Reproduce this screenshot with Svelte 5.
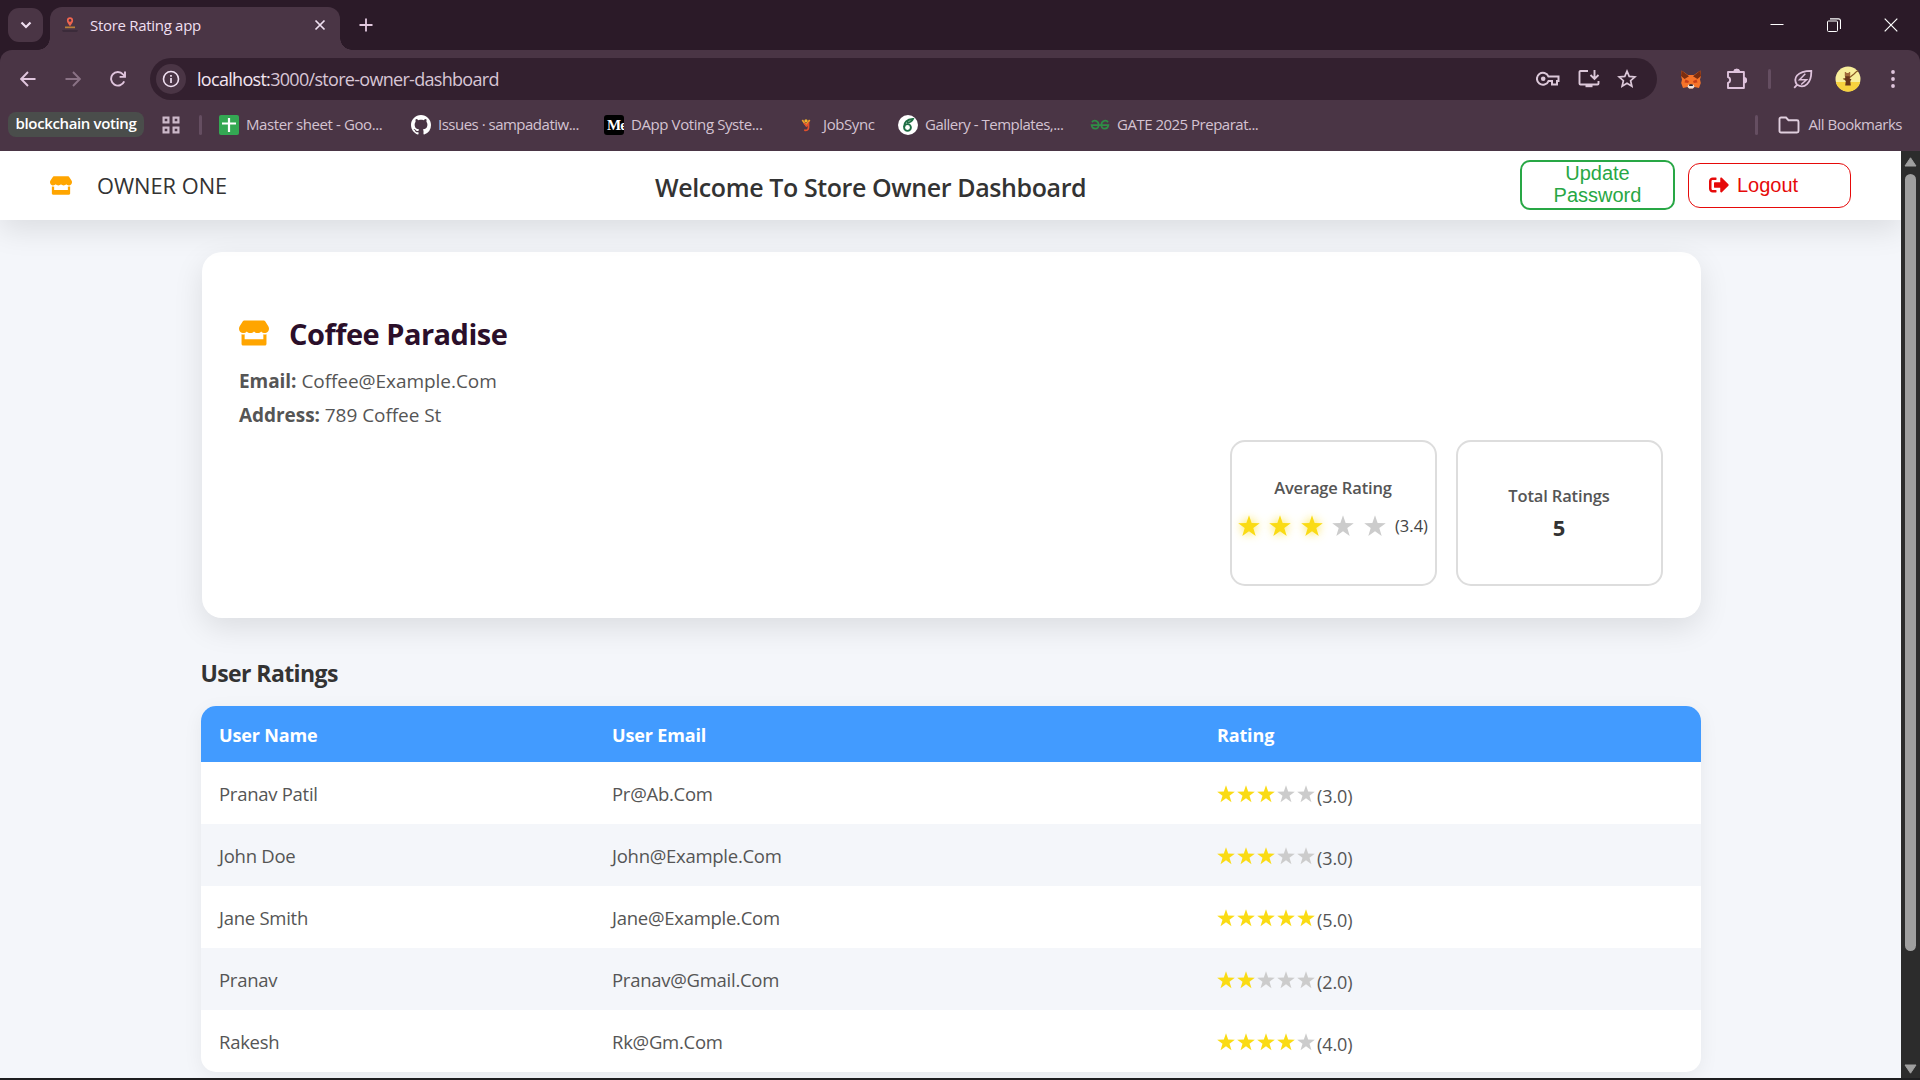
<script>
  const ratings = [
    { name: 'Pranav Patil', email: 'Pr@Ab.Com', score: 3 },
    { name: 'John Doe', email: 'John@Example.Com', score: 3 },
    { name: 'Jane Smith', email: 'Jane@Example.Com', score: 5 },
    { name: 'Pranav', email: 'Pranav@Gmail.Com', score: 2 },
    { name: 'Rakesh', email: 'Rk@Gm.Com', score: 4 }
  ];
  const five = [1, 2, 3, 4, 5];
  const starPoints = '10,0.2 12.4,7.3 19.8,7.4 13.9,11.9 16.1,19.1 10,14.8 3.9,19.1 6.1,11.9 0.2,7.4 7.6,7.3';
</script>

{#snippet store(kind)}
  <svg class="store {kind}" viewBox="0 0 616 512"><path d="M602 118.6L537.1 15C531.3 5.7 521 0 510 0H106C95 0 84.7 5.7 78.9 15L14 118.6c-33.5 53.5-3.8 127.9 58.8 136.4 4.5.6 9.1.9 13.7.9 29.6 0 55.8-13 73.8-33.1 18 20.1 44.3 33.1 73.8 33.1 29.6 0 55.8-13 73.8-33.1 18 20.1 44.3 33.1 73.8 33.1 29.6 0 55.8-13 73.8-33.1 18.1 20.1 44.3 33.1 73.8 33.1 4.7 0 9.2-.3 13.7-.9 62.8-8.4 92.6-82.8 59-136.4zM529.5 288c-10 0-19.9-1.5-29.5-3.8V384H116v-99.8c-9.6 2.2-19.5 3.8-29.5 3.8-6 0-12.1-.4-18-1.2-5.6-.8-11.1-2.1-16.4-3.6V480c0 17.7 14.3 32 32 32h448c17.7 0 32-14.3 32-32V283.2c-5.4 1.6-10.8 2.9-16.4 3.6-6.1.8-12.1 1.2-18.2 1.2z" /></svg>
{/snippet}

<div class="window">
  <div class="tabstrip">
    <div class="tab-search">
      <svg width="12" height="8" viewBox="0 0 12 8"><path d="M1.5 1.5 6 6l4.500-4.500" fill="none" stroke="#efdff0" stroke-width="2.200" /></svg>
    </div>
    <div class="tab">
      <svg class="favicon" width="16" height="16" viewBox="0 0 16 16">
        <path d="M0 13h16l-1 2H1z" fill="#3b2b3a" />
        <path d="M3 9.500h10v1.700H3z" fill="#b9813a" />
        <path d="M8 9.300C6.500 7 4.900 5.300 4.900 3.400a3.100 3.100 0 0 1 6.200 0C11.100 5.300 9.500 7 8 9.300z" fill="#f0654f" />
        <circle cx="8" cy="3.400" r="1.300" fill="#4a3545" />
      </svg>
      <span class="tab-title">Store Rating app</span>
      <svg width="12" height="12" viewBox="0 0 12 12"><path d="M1.500 1.500l9 9M10.500 1.500l-9 9" stroke="#efdff0" stroke-width="1.700" /></svg>
    </div>
    <svg class="new-tab" width="14" height="14" viewBox="0 0 14 14"><path d="M7 .5v13M.5 7h13" stroke="#e3c9df" stroke-width="1.800" /></svg>
    <div class="win-controls">
      <svg width="14" height="14" viewBox="0 0 14 14"><path d="M.5 6.500h13" stroke="#fff" stroke-width="1" /></svg>
      <svg width="14" height="14" viewBox="0 0 14 14" fill="none" stroke="#fff"><rect x=".5" y="3" width="10" height="10.500" rx="1" /><path d="M3 .9h8.500a2 2 0 0 1 2 2V11" stroke-width="1.100" /></svg>
      <svg width="14" height="14" viewBox="0 0 14 14"><path d="M.7.7l12.600 12.600M13.300.7.7 13.300" stroke="#fff" stroke-width="1.200" /></svg>
    </div>
  </div>

  <div class="toolbar">
    <div class="nav">
      <svg width="16" height="16" viewBox="0 0 16 16" fill="none" stroke="#e0c5dd" stroke-width="1.900"><path d="M15.500 8H1.500M8 1 1.200 8 8 15" /></svg>
      <svg class="dim" width="16" height="16" viewBox="0 0 16 16" fill="none" stroke="#8a7285" stroke-width="1.900"><path d="M.5 8h14M8 1l6.800 7L8 15" /></svg>
      <svg width="16" height="16" viewBox="0 0 16 16" fill="none" stroke="#e0c5dd" stroke-width="1.900"><path d="M14.200 10.400A6.800 6.800 0 1 1 13 3.300L15 5.400" /><path d="M15 .5v5.400H9.600" /></svg>
    </div>
    <div class="omnibox">
      <div class="info">
        <svg width="18" height="18" viewBox="0 0 18 18" fill="none" stroke="#efdff0"><circle cx="9" cy="9" r="7.500" stroke-width="1.600" /><path d="M9 8v5M9 5v1.700" stroke-width="1.700" /></svg>
      </div>
      <span class="url"><b>localhost:</b>3000/store-owner-dashboard</span>
      <div class="omni-icons">
        <svg width="24" height="16" viewBox="0 0 24 16" fill="none" stroke="#dcc8d9" stroke-width="2"><path d="M12.500 5.500a6 6 0 1 0 0 4.500H16v3.500h5V10h1.500V5.500z" /><circle cx="7.200" cy="7.800" r="2.300" fill="#dcc8d9" stroke="none" /></svg>
        <svg width="22" height="20" viewBox="0 0 22 20" fill="none" stroke="#dcc8d9" stroke-width="1.900"><path d="M10 2H2.500a1 1 0 0 0-1 1v11.500a1 1 0 0 0 1 1h17a1 1 0 0 0 1-1V12M16.500 1v8.500M12.500 6l4 4 4-4" /><path d="M7.500 15.500h7v2.700h-7z" fill="#dcc8d9" stroke="none" /></svg>
        <svg width="20" height="20" viewBox="0 0 20 20" fill="none" stroke="#dcc8d9" stroke-width="1.700"><path d="M10 2.200l2.200 5.200 5.700.5-4.300 3.800 1.300 5.600L10 14.300l-4.900 3 1.300-5.600-4.300-3.800 5.700-.5z" /></svg>
      </div>
    </div>
    <div class="extensions">
      <svg width="20" height="19" viewBox="0 0 20 19">
        <path d="M.6.600 7 5h6l6.400-4.400L20 6l-1 3.500.8 3.500-1.800 5-4.500-1-1.700 1.600H8.200L6.500 17 2 18 .2 13 1 9.500 0 6z" fill="#f5742a" />
        <path d="M.6.600 8 6.200 3.600 9 0 6zM19.400.600 12 6.200 16.400 9 20 6z" fill="#7a2d10" />
        <path d="M4.500 9.500 8 11l-.8 2-3.700-.6zM15.500 9.500 12 11l.8 2 3.700-.6z" fill="#c8401a" />
        <path d="M7.300 14.800h5.400l.8 2-1.600 1.800H8.100l-1.600-1.800z" fill="#e9e2e0" /><path d="M8.500 14.300h3l.5 1.800H8z" fill="#27202b" />
      </svg>
      <svg class="puzzle" width="22" height="22" viewBox="0 0 22 22" fill="none" stroke="#dfc3dc" stroke-width="1.900" stroke-linejoin="round"><path d="M2 4h6.500a2.200 2.200 0 0 1 4.400 0h5v6.500a2 2 0 0 1 0 4V20H2v-5.200a2.900 2.900 0 0 0 0-5.600z" /><path d="M8.500 4a2.200 2.200 0 0 1 4.400 0zM17.900 10a2.200 2.200 0 0 1 0 4.400z" fill="#dfc3dc" /></svg>
      <i class="divider"></i>
      <svg width="20" height="20" viewBox="0 0 20 20" fill="none" stroke="#dfc3dc" stroke-width="1.800"><path d="M1.200 18.800 4 15.800C-.2 9.500 3.500 2 18.300 1.800 18.600 14 11.500 20.500 4 15.800" /><path d="M12.300 4.800 6.500 10.800h7L8.200 15.500" stroke-width="1.500" /></svg>
      <svg class="avatar" width="26" height="26" viewBox="0 0 26 26">
        <circle cx="13" cy="13" r="12.500" fill="#f8ee9b" /><path d="M.8 16h24.400a12.500 12.500 0 0 1-24.400 0z" fill="#f8d23e" />
        <path d="M14 12 19 8l2.500-2.500 2-.5M8 13l5-1" stroke="#8a5a25" stroke-width="1.200" fill="none" />
        <path d="M10 9.500h5l-.3 3 1.800 1-1.200 1.500.5 4.500h-5.600l.6-4.500L9 13.500l1.300-1z" fill="#67351b" /><path d="M9.800 6h1.400v1h2.600V6h1.400v4.300h-5.400z" fill="#a16b3b" />
      </svg>
      <svg class="menu" width="4" height="20" viewBox="0 0 4 20" fill="#e0c5dd"><circle cx="2" cy="3" r="1.900" /><circle cx="2" cy="10" r="1.900" /><circle cx="2" cy="17" r="1.900" /></svg>
    </div>
  </div>

  <div class="bookmarks">
    <span class="group">blockchain voting</span>
    <svg class="apps" width="20" height="20" viewBox="0 0 20 20" fill="none" stroke="#cdb9ca" stroke-width="2.200"><path d="M2.600 2.600h4.800v4.800H2.600zM12.600 2.600h4.800v4.800h-4.800zM2.600 12.600h4.800v4.800H2.600zM12.600 12.600h4.800v4.800h-4.800z" /></svg>
    <i class="divider"></i>
    <span class="bm sheet"><svg width="20" height="20" viewBox="0 0 20 20"><rect width="20" height="20" rx="2" fill="#34a853" /><path d="M10 3v14M3 8.500h14" stroke="#fff" stroke-width="2.200" /></svg><em>Master sheet - Goo...</em></span>
    <span class="bm issues"><svg width="20" height="20" viewBox="0 0 16 16"><path fill="#fff" d="M8 0C3.580 0 0 3.580 0 8c0 3.540 2.290 6.530 5.470 7.590.4.070.55-.17.55-.38 0-.19-.01-.82-.01-1.490-2.010.37-2.530-.49-2.690-.94-.09-.23-.48-.94-.82-1.130-.28-.15-.68-.52-.01-.53.63-.01 1.080.58 1.230.82.72 1.210 1.870.87 2.330.66.070-.52.28-.87.51-1.070-1.780-.2-3.640-.89-3.640-3.950 0-.87.31-1.590.82-2.150-.08-.2-.36-1.020.08-2.120 0 0 .67-.21 2.200.82.64-.18 1.320-.27 2-.27s1.360.09 2 .27c1.530-1.040 2.200-.82 2.200-.82.44 1.100.16 1.920.08 2.120.51.56.82 1.270.82 2.150 0 3.070-1.870 3.750-3.650 3.950.29.25.54.73.54 1.480 0 1.070-.01 1.930-.01 2.200 0 .21.15.46.55.38A8.010 8.010 0 0 0 16 8c0-4.420-3.580-8-8-8z" /></svg><em>Issues · sampadatiw...</em></span>
    <span class="bm dapp"><span class="medium">Me</span><em>DApp Voting Syste...</em></span>
    <span class="bm job"><svg width="20" height="20" viewBox="0 0 20 20" fill="none" stroke-width="1.700"><path d="M6.300 5 10 10l3.700-5" stroke="#efa22a" /><circle cx="10" cy="5.800" r="1.600" fill="#f5b62c" /><path d="M8 8l2.500 3 2-2.500v4c0 2.200-1.300 3.200-4.300 2.700" stroke="#e2502c" /></svg><em>JobSync</em></span>
    <span class="bm gallery"><svg width="20" height="20" viewBox="0 0 20 20" fill="none" stroke="#1f6f45"><circle cx="10" cy="10" r="10" fill="#fff" stroke="none" /><circle cx="9.500" cy="12.500" r="3.400" stroke-width="1.900" /><path d="M6.100 12C6 7.500 9 4.500 15 4c-1 2.500-3 3.500-6 3.700" stroke-width="1.900" /></svg><em>Gallery - Templates,...</em></span>
    <span class="bm gate"><svg width="20" height="12" viewBox="0 0 20 12" fill="none" stroke="#2f8d46" stroke-width="1.700"><path d="M2 3.200C3.500.8 8.600 1.200 8.600 6c0 4.800-6.300 5-7 .2h16.800c-.7 4.800-7 4.600-7-.2 0-4.800 5.100-5.200 6.600-2.800" /></svg><em>GATE 2025 Preparat...</em></span>
    <span class="all"><i class="divider"></i><svg width="22" height="18" viewBox="0 0 22 18" fill="none" stroke="#e0cfde" stroke-width="1.900"><path d="M1.500 3a1.500 1.500 0 0 1 1.500-1.500h5l2.500 2.700h8.500A1.500 1.500 0 0 1 20.500 5.700V15a1.500 1.500 0 0 1-1.500 1.500H3A1.500 1.500 0 0 1 1.500 15z" /></svg><em>All Bookmarks</em></span>
  </div>

  <div class="viewport">
    <div class="page">
      <header>
        {@render store('small')}
        <span class="owner">OWNER ONE</span>
        <h1>Welcome To Store Owner Dashboard</h1>
        <button class="update">Update Password</button>
        <button class="logout">
          <svg width="20" height="20" viewBox="0 0 512 512" fill="#e60a0a"><path d="M497 273L329 441c-15 15-41 4.500-41-17v-96H152c-13.300 0-24-10.700-24-24v-96c0-13.300 10.700-24 24-24h136V88c0-21.400 25.900-32 41-17l168 168c9.300 9.400 9.300 24.600 0 34zM192 436v-40c0-6.600-5.400-12-12-12H96c-17.700 0-32-14.300-32-32V160c0-17.700 14.300-32 32-32h84c6.600 0 12-5.400 12-12V76c0-6.600-5.400-12-12-12H96c-53 0-96 43-96 96v192c0 53 43 96 96 96h84c6.600 0 12-5.400 12-12z" /></svg>
          Logout
        </button>
      </header>

      <section class="card">
        <h2>{@render store('large')}<span>Coffee Paradise</span></h2>
        <p class="email"><b>Email:</b> Coffee@Example.Com</p>
        <p class="address"><b>Address:</b> 789 Coffee St</p>
        <div class="stats">
          <div class="stat">
            <span class="label avg">Average Rating</span>
            <div class="big-stars">
              {#each five as n}
                <svg class:on={n <= 3} viewBox="0 0 20 20"><polygon points={starPoints} /></svg>
              {/each}
              <span>(3.4)</span>
            </div>
          </div>
          <div class="stat">
            <span class="label total">Total Ratings</span>
            <strong>5</strong>
          </div>
        </div>
      </section>

      <h3>User Ratings</h3>
      <div class="table">
        <div class="row head"><span>User Name</span><span>User Email</span><span>Rating</span></div>
        {#each ratings as r}
          <div class="row">
            <span>{r.name}</span>
            <span>{r.email}</span>
            <span class="stars">
              {#each five as n}
                <svg class:on={n <= r.score} viewBox="0 0 20 20"><polygon points={starPoints} /></svg>
              {/each}
              <small>({r.score}.0)</small>
            </span>
          </div>
        {/each}
      </div>
    </div>
    <div class="scrollbar">
      <svg width="13" height="10" viewBox="0 0 13 10"><path d="M6.500.8 12 9H1z" fill="#9f9f9f" stroke="#9f9f9f" stroke-linejoin="round" /></svg>
      <div class="thumb"></div>
      <svg class="down" width="13" height="10" viewBox="0 0 13 10"><path d="M6.500 9.200 12 1H1z" fill="#9f9f9f" stroke="#9f9f9f" stroke-linejoin="round" /></svg>
    </div>
  </div>
</div>

<style>
  :global(body) { margin: 0; background: #1f1f1f; overflow: hidden; }
  .window, .window * { box-sizing: border-box; }
  .window { width: 1920px; height: 1080px; display: flex; flex-direction: column; background: #2b1a28; font-family: 'Segoe UI', 'Open Sans', sans-serif; white-space: nowrap; border-bottom: 2px solid #1e1e20; }
  svg { flex: none; display: block; }
  em { font-style: normal; }
  .divider { width: 3px; height: 20px; border-radius: 2px; background: #654e61; flex: none; }

  .tabstrip { height: 50px; display: flex; align-items: center; padding-left: 8px; flex: none; }
  .tab-search { width: 35px; height: 34px; border-radius: 11px; background: #4a3545; display: grid; place-items: center; }
  .tab { position: relative; width: 290px; height: 43px; margin: 7px 0 0 7px; padding: 0 14px 7px 12px; border-radius: 12px 12px 0 0; background: #4a3545; display: flex; align-items: center; }
  .tab::before, .tab::after { content: ''; position: absolute; bottom: 0; width: 12px; height: 12px; }
  .tab::before { left: -12px; background: radial-gradient(circle at 0 0, transparent 11.500px, #4a3545 12px); }
  .tab::after { right: -12px; background: radial-gradient(circle at 100% 0, transparent 11.500px, #4a3545 12px); }
  .favicon { margin-bottom: 1px; }
  .tab-title { flex: 1; margin-left: 12px; font-size: 15px; letter-spacing: -0.3px; color: #efdff0; }
  .new-tab { margin-left: 19px; }
  .win-controls { margin: 0 22px 0 auto; display: flex; gap: 43px; }

  .toolbar { height: 50px; flex: none; display: flex; align-items: center; padding: 8px 0 0 20px; background: #4a3545; border-radius: 12px 12px 0 0; }
  .nav { display: flex; gap: 29px; width: 130px; }
  .omnibox { width: 1507px; height: 42px; border-radius: 21px; background: #33202f; display: flex; align-items: center; padding: 0 20px 0 6px; }
  .info { width: 30px; height: 30px; border-radius: 50%; background: #4a3545; display: grid; place-items: center; }
  .url { margin-left: 11px; font-size: 18px; letter-spacing: -0.7px; color: #d8c6d6; }
  .url b { font-weight: 400; color: #f3e6f2; }
  .omni-icons { margin-left: auto; display: flex; align-items: center; gap: 17.500px; }
  .extensions { flex: 1; display: flex; align-items: center; margin-left: 23.500px; }
  .puzzle { margin: 0 20px 0 25px; }
  .extensions .divider { margin-right: 22px; }
  .avatar { margin: 0 30px 0 22px; }

  .bookmarks { height: 51px; flex: none; display: flex; align-items: center; padding: 0 18px 2px 8px; background: #4a3545; font-size: 15px; color: #d4c3d2; letter-spacing: -0.4px; }
  .group { width: 136px; height: 25px; border-radius: 8px; background: #4a4d4b; color: #fff; font-weight: 600; line-height: 23px; text-align: center; letter-spacing: -0.37px; }
  .apps { margin: 0 18px 0 17px; }
  .bm { display: flex; align-items: center; gap: 7px; flex: none; }
  .bm em, .all em { margin-bottom: 2px; }
  .sheet { margin-left: 17px; width: 192px; }
  .issues { width: 193px; letter-spacing: -0.5px; }
  .dapp { width: 192px; }
  .job { width: 102px; }
  .gallery { width: 192px; letter-spacing: -0.5px; }
  .gate { letter-spacing: -0.5px; }
  .medium { width: 20px; height: 20px; border-radius: 3px; overflow: hidden; background: #000; color: #fff; font: bold 15px/20px 'Liberation Serif', serif; padding-left: 3px; letter-spacing: -1px; }
  .all { margin-left: auto; display: flex; align-items: center; letter-spacing: -0.5px; }
  .all svg { margin: 0 9px 0 20px; }

  .viewport { flex: 1; display: flex; min-height: 0; }
  .page { flex: 1; background: #f4f6fa; overflow: hidden; color: #555; }
  header { position: relative; height: 69px; background: #fff; box-shadow: 0 10px 30px rgba(0, 0, 0, 0.1); display: flex; align-items: center; padding: 0 50px; }
  .store { fill: #ffa500; }
  .small { width: 22px; height: 19px; }
  .large { width: 30px; height: 26px; }
  .owner { width: 583px; flex: none; padding-left: 25px; font-size: 21.800px; font-weight: 500; color: #333; }
  h1 { margin: 2px 0 0; width: 840px; flex: none; font-size: 25px; font-weight: 600; letter-spacing: -0.4px; color: #333; }
  button { font: 20px/22px 'Liberation Sans', Arial, sans-serif; background: #fff; padding: 0; flex: none; }
  .update { width: 155px; height: 50px; margin: 0 0 2px 25px; padding: 0 25px 1px; border: 2px solid #28a745; border-radius: 10px; color: #28a745; white-space: normal; }
  .logout { width: 163px; height: 45px; margin-left: 13px; padding: 0 0 1px 20px; border: 1px solid #e60a0a; border-radius: 12px; color: #e60a0a; display: flex; align-items: center; gap: 8px; }

  .card { width: 1499px; height: 366px; margin: 32px 0 0 201.500px; padding: 59px 38px 0 37.500px; background: #fff; border-radius: 20px; box-shadow: 0 10px 30px rgba(0, 0, 0, 0.1); }
  h2 { margin: 0; height: 44px; display: flex; align-items: center; gap: 20px; font-size: 29px; font-weight: 700; letter-spacing: -0.5px; color: #2b0f2a; }
  p { margin: 0; height: 34px; line-height: 34px; font-size: 19px; letter-spacing: -0.05px; }
  .email { margin-top: 9px; }
  .stats { display: flex; justify-content: flex-end; gap: 19px; margin-top: 8px; }
  .stat { width: 207px; height: 146px; border: 2px solid #ddd; border-radius: 15px; display: flex; flex-direction: column; align-items: center; padding-top: 34px; }
  .label { font-size: 16.500px; font-weight: 600; line-height: 24px; letter-spacing: -0.15px; }
  .total { margin-top: 8px; }
  .stat strong { font-size: 22px; line-height: 38px; color: #333; }
  .big-stars { display: flex; align-items: center; gap: 9.400px; margin-top: 15px; height: 22px; }
  .big-stars svg { width: 22px; height: 22px; fill: #ccc; overflow: visible; }
  .big-stars .on { fill: #fadb14; filter: drop-shadow(0 0 5px rgba(250, 219, 20, 0.75)); }
  .big-stars span { font-size: 16.500px; font-weight: 500; color: #444; margin-bottom: 2px; }

  h3 { margin: 35px 0 0 200.500px; height: 53px; line-height: 40px; font-size: 23px; font-weight: 700; letter-spacing: -0.6px; color: #333; }
  .table { width: 1500px; margin-left: 201px; border-radius: 15px; overflow: hidden; box-shadow: 0 5px 20px rgba(0, 0, 0, 0.06); background: #fff; font-size: 18.500px; letter-spacing: -0.27px; }
  .row { height: 62px; display: grid; grid-template-columns: 393px 605px 1fr; align-items: center; padding: 0 18px; }
  .row:nth-child(odd) { background: #f4f6fa; }
  .row.head { height: 56px; padding-top: 2px; background: #429bff; color: #fff; font-weight: 700; font-size: 18px; letter-spacing: -0.15px; }
  .stars { display: flex; align-items: center; letter-spacing: -0.1px; padding-top: 2px; }
  .stars svg { width: 18px; height: 18px; margin-right: 2px; fill: #ccc; }
  .stars .on { fill: #fadb14; }
  small { font-size: 18px; margin-top: 3px; }

  .scrollbar { width: 19px; background: #2c2c2c; display: flex; flex-direction: column; align-items: center; padding: 6px 0 4px; }
  .thumb { width: 11px; height: 777px; margin-top: 7px; border-radius: 6px; background: #9f9f9f; }
  .down { margin-top: auto; }
</style>
